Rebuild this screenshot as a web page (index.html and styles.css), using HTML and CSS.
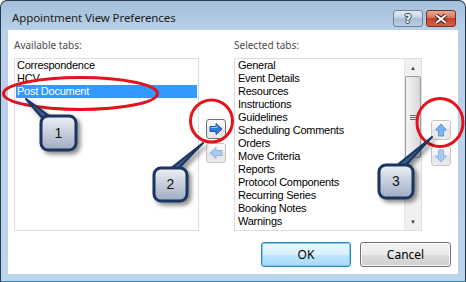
FILE: index.html
```html
<!DOCTYPE html>
<html lang="en">
<head>
    <meta charset="UTF-8">
    <title>Appointment View Preferences</title>
    <link rel="stylesheet" href="styles.css">
</head>
<body>
<div class="window">
    <div class="titlebar">
        <span class="title">Appointment View Preferences</span>
        <div class="caption-buttons">
            <div class="cap-btn help">?</div>
            <div class="cap-btn close">
                <svg width="14" height="10" viewBox="0 0 14 10">
                    <path d="M2 1l5 4 5-4M2 9l5-4 5 4" stroke="#4a1a12" stroke-width="4" fill="none"/>
                    <path d="M2 1l5 4 5-4M2 9l5-4 5 4" stroke="#fff" stroke-width="2" fill="none"/>
                </svg>
            </div>
        </div>
    </div>
    <div class="client">
        <div class="panes">
            <div class="label">Available tabs:</div>
            <div></div>
            <div class="label">Selected tabs:</div>
            <div></div>

            <div class="listbox left-list">
                <div class="item">Correspondence</div>
                <div class="item">HCV</div>
                <div class="item selected">Post Document</div>
            </div>
            <div class="move-buttons">
                <div class="icon-btn focused">
                    <svg width="14" height="12" viewBox="0 0 14 12">
                        <path d="M1 3.5h6V0.5l6 5.5-6 5.5V8.5H1z" fill="#2f7ad8" stroke="#1c58a8" stroke-width="1"/>
                        <path d="M2 4.5h6V3" stroke="#9cc8f6" stroke-width="1" fill="none"/>
                    </svg>
                </div>
                <div class="icon-btn">
                    <svg width="14" height="12" viewBox="0 0 14 12">
                        <path d="M13 3.5H7V0.5L1 6l6 5.5V8.5h6z" fill="#a9cbf0" stroke="#8cb4e2" stroke-width="1"/>
                    </svg>
                </div>
            </div>
            <div class="listbox right-list">
                <div class="items">
                    <div class="item">General</div>
                    <div class="item">Event Details</div>
                    <div class="item">Resources</div>
                    <div class="item">Instructions</div>
                    <div class="item">Guidelines</div>
                    <div class="item">Scheduling Comments</div>
                    <div class="item">Orders</div>
                    <div class="item">Move Criteria</div>
                    <div class="item">Reports</div>
                    <div class="item">Protocol Components</div>
                    <div class="item">Recurring Series</div>
                    <div class="item">Booking Notes</div>
                    <div class="item">Warnings</div>
                    <div class="item">Access Details</div>
                </div>
                <div class="scrollbar">
                    <div class="sb-arrow">&#9650;</div>
                    <div class="sb-track">
                        <div class="sb-thumb"><span class="grip"></span></div>
                    </div>
                    <div class="sb-arrow">&#9660;</div>
                </div>
            </div>
            <div class="order-buttons">
                <div class="icon-btn">
                    <svg width="12" height="14" viewBox="0 0 12 14">
                        <path d="M3.5 13V7H0.5L6 1l5.5 6H8.5v6z" fill="#7fb4ec" stroke="#5b95d6" stroke-width="1"/>
                    </svg>
                </div>
                <div class="icon-btn">
                    <svg width="12" height="14" viewBox="0 0 12 14">
                        <path d="M3.5 1v6H0.5L6 13l5.5-6H8.5V1z" fill="#a9cbf0" stroke="#8cb4e2" stroke-width="1"/>
                    </svg>
                </div>
            </div>
        </div>
        <div class="dialog-buttons">
            <div class="button default">OK</div>
            <div class="button">Cancel</div>
        </div>
    </div>
</div>

<svg class="annotations" width="466" height="282" viewBox="0 0 466 282">
    <defs>
        <linearGradient id="box" x1="0" y1="0" x2="0" y2="1">
            <stop offset="0" stop-color="#eef1f6"/>
            <stop offset="1" stop-color="#9eabc2"/>
        </linearGradient>
        <filter id="shadow" x="-30%" y="-30%" width="170%" height="170%">
            <feDropShadow dx="3" dy="3" stdDeviation="2" flood-color="#000" flood-opacity="0.45"/>
        </filter>
    </defs>

    <ellipse cx="80.5" cy="93.5" rx="77" ry="16" fill="none" stroke="#e3121b" stroke-width="3"/>
    <ellipse cx="211.5" cy="121" rx="21" ry="21" fill="none" stroke="#e3121b" stroke-width="3"/>
    <ellipse cx="440" cy="122.5" rx="23" ry="24" fill="none" stroke="#e3121b" stroke-width="3"/>

    <g filter="url(#shadow)">
        <path d="M26 99 L52 118 L44 120 Z" fill="#3a5a86" stroke="#1b355e" stroke-width="2" stroke-linejoin="round"/>
        <rect x="41" y="116" width="35" height="34" rx="7" fill="url(#box)" stroke="#1b355e" stroke-width="3"/>
    </g>
    <text x="58.5" y="138" class="callout-num">1</text>

    <g filter="url(#shadow)">
        <path d="M203 143 L178 169 L170 169 Z" fill="#3a5a86" stroke="#1b355e" stroke-width="2" stroke-linejoin="round"/>
        <rect x="154" y="168" width="33" height="33" rx="7" fill="url(#box)" stroke="#1b355e" stroke-width="3"/>
    </g>
    <text x="170.5" y="189" class="callout-num">2</text>

    <g filter="url(#shadow)">
        <path d="M432 137 L405 166 L396 166 Z" fill="#3a5a86" stroke="#1b355e" stroke-width="2" stroke-linejoin="round"/>
        <rect x="379" y="165" width="34" height="33" rx="7" fill="url(#box)" stroke="#1b355e" stroke-width="3"/>
    </g>
    <text x="396" y="186" class="callout-num">3</text>
</svg>
</body>
</html>
```

FILE: styles.css
```css
* {
    box-sizing: border-box;
}

body {
    margin: 0;
    width: 466px;
    height: 282px;
    overflow: hidden;
    position: relative;
    background: #ffffff;
    font-family: "Liberation Sans", Arial, sans-serif;
    font-size: 11px;
    color: #000;
}

.window {
    display: flex;
    flex-direction: column;
    width: 466px;
    height: 282px;
    border: 1px solid #26384c;
    border-bottom-color: #1f8fa8;
    border-radius: 7px 7px 0 0;
    background: linear-gradient(to bottom, #a5bfdb 0, #b9d0e8 30px, #bcd4ec 100%);
}

.titlebar {
    height: 29px;
    display: flex;
    align-items: flex-start;
    justify-content: space-between;
    padding: 0 9px 0 11px;
}

.title {
    font-family: "Noto Sans", sans-serif;
    font-size: 11.5px;
    color: #1c1c1c;
    margin-top: 9px;
    letter-spacing: -0.1px;
}

.caption-buttons {
    display: flex;
    gap: 3px;
    margin-top: 9px;
}

.cap-btn {
    width: 30px;
    height: 17px;
    border-radius: 3px;
    display: flex;
    align-items: center;
    justify-content: center;
}

.help {
    border: 1px solid #6f8399;
    background: linear-gradient(to bottom, #e1eaf4 0%, #c4d5e7 45%, #a9bfd7 50%, #b9cde2 100%);
    font-family: "DejaVu Sans", sans-serif;
    font-weight: bold;
    font-size: 12px;
    color: #fff;
    text-shadow: 0 0 1px #34455a, 1px 0 0 #34455a, -1px 0 0 #34455a, 0 1px 0 #34455a, 0 -1px 0 #34455a;
}

.close {
    border: 1px solid #7a2a1e;
    background: linear-gradient(to bottom, #e9a897 0%, #d87560 45%, #c4432a 50%, #d4604a 100%);
}

.client {
    flex: 1;
    margin: 0 7px 7px 7px;
    background: #ffffff;
    padding: 9px 7px 0 6px;
}

.panes {
    display: grid;
    grid-template-columns: 185px 35px 188px 29px;
    grid-template-rows: 13px 173px;
    row-gap: 6px;
}

.label {
    font-family: "Noto Sans", sans-serif;
    font-size: 10px;
    line-height: 13px;
    color: #4a4a4a;
}

.listbox {
    border: 1px solid #dadde3;
    background: #fff;
    overflow: hidden;
}

.left-list {
    padding: 0 1px;
}

.item {
    height: 13px;
    line-height: 13px;
    padding-left: 1px;
    white-space: nowrap;
    letter-spacing: -0.25px;
}

.selected {
    background: #3399ff;
    color: #fff;
}

.right-list {
    display: flex;
}

.right-list .items {
    flex: 1;
    padding-left: 2px;
    overflow: hidden;
}

.scrollbar {
    width: 17px;
    display: flex;
    flex-direction: column;
    background: #f0f0f0;
    border-left: 1px solid #e6e6e6;
}

.sb-arrow {
    height: 17px;
    font-size: 6px;
    color: #404040;
    display: flex;
    align-items: center;
    justify-content: center;
}

.sb-track {
    flex: 1;
}

.sb-thumb {
    height: 82px;
    border: 1px solid #9b9b9b;
    border-radius: 2px;
    background: linear-gradient(to right, #f4f4f4, #e7e7e7 50%, #d6d6d6);
    display: flex;
    align-items: center;
    justify-content: center;
}

.grip {
    width: 7px;
    height: 5px;
    border-top: 1px solid #6a6a6a;
    border-bottom: 1px solid #6a6a6a;
    background: linear-gradient(#6a6a6a, #6a6a6a) center / 100% 1px no-repeat;
}

.move-buttons,
.order-buttons {
    display: flex;
    flex-direction: column;
}

.move-buttons {
    padding: 61px 0 0 7px;
    gap: 4px;
}

.order-buttons {
    padding: 62px 0 0 9px;
    gap: 6px;
}

.icon-btn {
    width: 20px;
    height: 20px;
    border: 1px solid #c4c4c4;
    border-radius: 3px;
    background: linear-gradient(to bottom, #fbfbfb, #eeeeee 50%, #e3e3e3 51%, #ececec);
    display: flex;
    align-items: center;
    justify-content: center;
}

.icon-btn.focused {
    border-color: #707070;
}

.dialog-buttons {
    display: flex;
    justify-content: flex-end;
    gap: 9px;
    margin-top: 11px;
}

.button {
    width: 91px;
    height: 25px;
    border: 1px solid #707070;
    border-radius: 3px;
    background: linear-gradient(to bottom, #f2f2f2 0%, #ebebeb 50%, #dddddd 51%, #cfcfcf 100%);
    box-shadow: inset 0 0 0 1px #fcfcfc;
    font-family: "Noto Sans", sans-serif;
    font-size: 12px;
    display: flex;
    align-items: center;
    justify-content: center;
}

.button.default {
    width: 90px;
    border-color: #3c7fb1;
    background: linear-gradient(to bottom, #eaf6fd 0%, #d9f0fc 50%, #bee6fd 51%, #a7d9f5 100%);
    box-shadow: inset 0 0 0 1px #6bd4f8;
}

.annotations {
    position: absolute;
    left: 0;
    top: 0;
    pointer-events: none;
}

.callout-num {
    font-family: "Liberation Sans", Arial, sans-serif;
    font-size: 14px;
    fill: #111;
    text-anchor: middle;
}
```
